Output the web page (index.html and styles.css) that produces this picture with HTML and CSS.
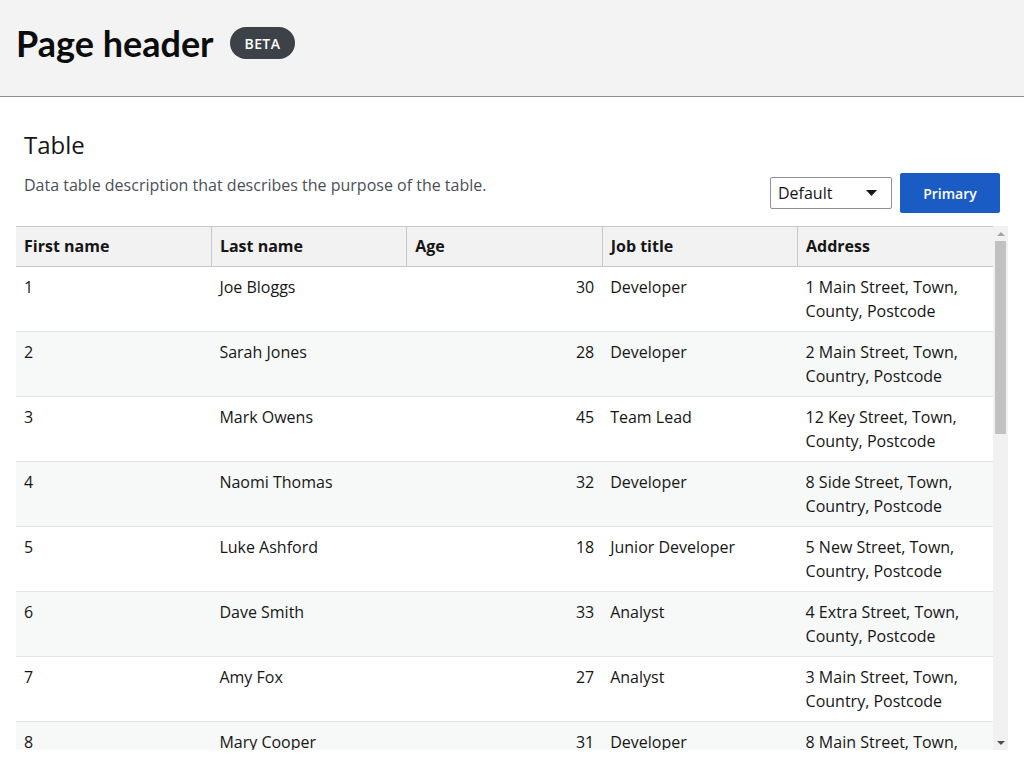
FILE: index.html
```html
<!DOCTYPE html>
<html lang="en">
<head>
<meta charset="utf-8">
<title>Page header</title>
<link rel="stylesheet" href="styles.css">
</head>
<body>
<header class="page-header">
  <h1 class="page-title">Page header</h1>
  <span class="badge">BETA</span>
</header>
<main class="content">
  <div class="table-head">
    <h2 class="table-title">Table</h2>
    <div class="table-bar">
      <p class="table-desc">Data table description that describes the purpose of the table.</p>
      <div class="table-actions">
        <div class="select">
          <span>Default</span>
          <svg class="caret" width="11" height="6" viewBox="0 0 11 6"><path d="M0 0h11L5.5 6z" fill="#161616"/></svg>
        </div>
        <button class="btn-primary">Primary</button>
      </div>
    </div>
  </div>
  <div class="table-frame">
    <div class="table-scroll">
      <table class="data-table">
        <thead>
          <tr><th>First name</th><th>Last name</th><th>Age</th><th>Job title</th><th>Address</th></tr>
        </thead>
        <tbody>
          <tr><td>1</td><td>Joe Bloggs</td><td class="num">30</td><td>Developer</td><td>1 Main Street, Town, County, Postcode</td></tr>
          <tr><td>2</td><td>Sarah Jones</td><td class="num">28</td><td>Developer</td><td>2 Main Street, Town, Country, Postcode</td></tr>
          <tr><td>3</td><td>Mark Owens</td><td class="num">45</td><td>Team Lead</td><td>12 Key Street, Town, County, Postcode</td></tr>
          <tr><td>4</td><td>Naomi Thomas</td><td class="num">32</td><td>Developer</td><td>8 Side Street, Town, Country, Postcode</td></tr>
          <tr><td>5</td><td>Luke Ashford</td><td class="num">18</td><td>Junior Developer</td><td>5 New Street, Town, Country, Postcode</td></tr>
          <tr><td>6</td><td>Dave Smith</td><td class="num">33</td><td>Analyst</td><td>4 Extra Street, Town, County, Postcode</td></tr>
          <tr><td>7</td><td>Amy Fox</td><td class="num">27</td><td>Analyst</td><td>3 Main Street, Town, Country, Postcode</td></tr>
          <tr><td>8</td><td>Mary Cooper</td><td class="num">31</td><td>Developer</td><td>8 Main Street, Town, County, Postcode</td></tr>
          <tr><td>9</td><td>Tom Harris</td><td class="num">41</td><td>Team Lead</td><td>9 High Street, Town, County, Postcode</td></tr>
          <tr><td>10</td><td>Lucy Green</td><td class="num">25</td><td>Junior Developer</td><td>10 Park Road, Town, Country, Postcode</td></tr>
          <tr><td>11</td><td>Paul Walker</td><td class="num">36</td><td>Developer</td><td>11 Mill Lane, Town, County, Postcode</td></tr>
          <tr><td>12</td><td>Emma Clark</td><td class="num">29</td><td>Analyst</td><td>14 Church Street, Town, County, Postcode</td></tr>
          <tr><td>13</td><td>James Hall</td><td class="num">38</td><td>Developer</td><td>6 Station Road, Town, Country, Postcode</td></tr>
          <tr><td>14</td><td>Kate Lewis</td><td class="num">34</td><td>Team Lead</td><td>7 Green Lane, Town, County, Postcode</td></tr>
          <tr><td>15</td><td>Ben Wright</td><td class="num">22</td><td>Junior Developer</td><td>15 King Street, Town, Country, Postcode</td></tr>
          <tr><td>16</td><td>Sophie King</td><td class="num">30</td><td>Analyst</td><td>16 Queen Street, Town, County, Postcode</td></tr>
          <tr><td>17</td><td>Adam Scott</td><td class="num">44</td><td>Developer</td><td>17 Bridge Street, Town, County, Postcode</td></tr>
          <tr><td>18</td><td>Laura Baker</td><td class="num">26</td><td>Developer</td><td>18 West Street, Town, Country, Postcode</td></tr>
          <tr><td>19</td><td>Chris Young</td><td class="num">39</td><td>Analyst</td><td>19 North Road, Town, County, Postcode</td></tr>
          <tr><td>20</td><td>Hannah Adams</td><td class="num">31</td><td>Team Lead</td><td>20 South Road, Town, Country, Postcode</td></tr>
        </tbody>
      </table>
    </div>
    <div class="scrollbar" aria-hidden="true">
      <div class="sb-btn">
        <svg width="8" height="4" viewBox="0 0 8 4"><path d="M0 4h8L4 0z" fill="#a3a3a3"/></svg>
      </div>
      <div class="sb-track"><div class="sb-thumb"></div></div>
      <div class="sb-btn">
        <svg width="8" height="4" viewBox="0 0 8 4"><path d="M0 0h8L4 4z" fill="#505050"/></svg>
      </div>
    </div>
  </div>
</main>
</body>
</html>
```

FILE: styles.css
```css
* { box-sizing: border-box; }
html, body { margin: 0; height: 100%; }
body {
  font-family: "Open Sans", "Noto Sans", sans-serif;
  color: #161616;
  background: #fff;
  display: flex;
  flex-direction: column;
  overflow: hidden;
}
.page-header {
  height: 97px;
  flex: none;
  background: #f3f3f3;
  border-bottom: 1px solid #8d9199;
  display: flex;
  align-items: center;
  padding: 0 16px 10px 16px;
  gap: 16px;
}
.page-title {
  margin: 0;
  font-family: "Lato", sans-serif;
  font-weight: 700;
  font-size: 36px;
  line-height: 40px;
  color: #0b0c0c;
}
.badge {
  display: inline-flex;
  align-items: center;
  height: 32px;
  padding: 0 15px;
  border-radius: 16px;
  background: #3d4148;
  color: #fff;
  font-size: 14px;
  font-weight: 600;
  letter-spacing: 0.4px;
}
.content {
  flex: 1;
  min-height: 0;
  display: flex;
  flex-direction: column;
  padding: 32px 16px 18px 16px;
}
.table-head {
  padding: 0 8px 13px 8px;
}
.table-title {
  margin: 0;
  font-weight: 400;
  font-size: 24px;
  line-height: 32px;
  color: #161616;
}
.table-bar {
  display: flex;
  justify-content: space-between;
  align-items: flex-start;
  margin-top: 12px;
}
.table-desc {
  margin: 0;
  font-size: 16px;
  line-height: 24px;
  color: #4a4f57;
}
.table-actions {
  display: flex;
  align-items: center;
  gap: 8px;
}
.select {
  width: 122px;
  height: 32px;
  border: 1px solid #8d9199;
  border-radius: 2px;
  display: flex;
  align-items: center;
  justify-content: space-between;
  padding: 0 14px 0 7px;
  font-size: 16px;
  color: #161616;
}
.btn-primary {
  width: 100px;
  height: 40px;
  border: none;
  border-radius: 2px;
  background: #1a5bc4;
  color: #fff;
  font-family: "Open Sans", sans-serif;
  font-size: 14px;
  font-weight: 600;
}
.table-frame {
  flex: 1;
  min-height: 0;
  display: flex;
}
.table-scroll {
  flex: 1;
  min-width: 0;
  overflow-y: auto;
  overflow-x: hidden;
  scrollbar-width: none;
}
.table-scroll::-webkit-scrollbar { display: none; }
.scrollbar {
  width: 15px;
  flex: none;
  display: flex;
  flex-direction: column;
  background: #f1f1f1;
}
.sb-btn {
  height: 15px;
  flex: none;
  display: flex;
  align-items: center;
  justify-content: center;
}
.sb-track {
  flex: 1;
  padding: 0 2px;
}
.sb-thumb {
  height: 193px;
  background: #c1c1c1;
}
.data-table {
  width: 100%;
  table-layout: fixed;
  border-collapse: collapse;
  font-size: 16px;
  line-height: 24px;
}
.data-table th {
  background: #f2f2f2;
  text-align: left;
  font-weight: 700;
  padding: 7px 8px 8px 8px;
  border-top: 1px solid #c8c9cc;
  border-bottom: 1px solid #c8c9cc;
  border-left: 1px solid #c8c9cc;
}
.data-table th:first-child { border-left: none; }
.data-table td {
  padding: 8px;
  vertical-align: top;
  border-bottom: 1px solid #e4e5e6;
  color: #161616;
}
.data-table td.num { text-align: right; }
.data-table tbody tr:nth-child(even) td { background: #f7f8f8; }
```
